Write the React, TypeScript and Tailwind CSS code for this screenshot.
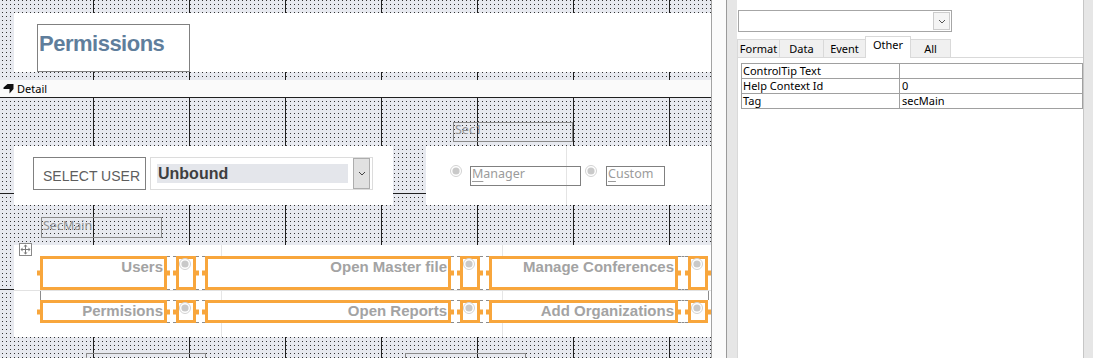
import React from "react";

const gridHeader =
  "bg-[#333333] [background-image:linear-gradient(to_right,transparent_93px,#1f1f1f_93px,#1f1f1f_94px,transparent_94px),linear-gradient(to_right,#e7e9ef_2px,transparent_2px,transparent_3px,#e7e9ef_3px),linear-gradient(to_bottom,transparent_1px,#e7e9ef_1px)] [background-size:96px_100%,4px_4px,4px_4px]";
const gridDetail =
  "bg-[#333333] [background-image:linear-gradient(to_right,transparent_93px,#1f1f1f_93px,#1f1f1f_94px,transparent_94px),linear-gradient(to_bottom,#1f1f1f_1px,transparent_1px),linear-gradient(to_right,#e7e9ef_2px,transparent_2px,transparent_3px,#e7e9ef_3px),linear-gradient(to_bottom,transparent_1px,#e7e9ef_1px)] [background-size:96px_100%,100%_96px,4px_4px,4px_4px]";

function Radio() {
  return (
    <svg width="12" height="12" viewBox="0 0 12 12" className="block shrink-0">
      <circle cx="6" cy="6" r="5.5" fill="#ffffff" stroke="#d2d2d2" />
      <circle cx="6" cy="6" r="3.6" fill="#c9c9c9" />
    </svg>
  );
}

function Handles() {
  return (
    <>
      <span className="absolute -left-[6px] top-1/2 -translate-y-1/2 w-[3px] h-[5px] bg-[#f8a63c]" />
      <span className="absolute -right-[6px] top-1/2 -translate-y-1/2 w-[3px] h-[5px] bg-[#f8a63c]" />
    </>
  );
}

function LabelBox({ className, text }: { className: string; text: string }) {
  return (
    <div className={`relative shrink-0 border-[3px] border-[#f8a63c] bg-white ${className}`}>
      <Handles />
      <div className="-mt-[1.5px] pr-px text-right font-bold text-[15px] leading-[17px] text-[#a3a3a3] font-['Liberation_Sans',Arial,sans-serif] whitespace-nowrap overflow-hidden">
        {text}
      </div>
    </div>
  );
}

function RadioBox() {
  return (
    <div className="relative shrink-0 w-[20px] border-[3px] border-[#f8a63c] bg-white">
      <Handles />
      <div className="-mt-px">
        <Radio />
      </div>
    </div>
  );
}

function Gap({ className }: { className: string }) {
  return <div className={`shrink-0 border-y border-dashed border-[#8c8c8c] ${className}`} />;
}

function ControlRow({ h, a, b, c }: { h: string; a: string; b: string; c: string }) {
  return (
    <div className={`flex ${h}`}>
      <LabelBox className="w-[127px]" text={a} />
      <Gap className="w-[9px]" />
      <RadioBox />
      <Gap className="w-[9px]" />
      <LabelBox className="w-[246px]" text={b} />
      <Gap className="w-[9px]" />
      <RadioBox />
      <Gap className="w-[9px]" />
      <LabelBox className="w-[189px]" text={c} />
      <Gap className="w-[10px]" />
      <RadioBox />
    </div>
  );
}

function MoveHandle() {
  return (
    <div className="absolute -top-[2px] left-[5px] w-[13px] h-[13px] border border-[#8a8a8a] bg-white flex items-center justify-center">
      <svg width="11" height="11" viewBox="0 0 11 11" className="block">
        <path d="M5.5 1.5v8M1.5 5.5h8" stroke="#7a7a7a" strokeWidth="1" />
        <path d="M5.5 0.5 3.5 2.5h4zM5.5 10.5 3.5 8.5h4zM0.5 5.5 2.5 3.5v4zM10.5 5.5 8.5 3.5v4z" fill="#7a7a7a" />
      </svg>
    </div>
  );
}

function DesignArea() {
  return (
    <div className="w-[711px] shrink-0 flex flex-col h-[358px] overflow-hidden">
      {/* Form header */}
      <div className={`h-[80px] shrink-0 pt-[13px] pl-[14px] ${gridHeader}`}>
        <div className="h-[59px] bg-white pl-[23px] pt-[11px]">
          <div className="w-[153px] h-[48px] border border-[#808080] pl-px pt-[6px] font-['Liberation_Sans',Arial,sans-serif] font-bold text-[22px] leading-[26px] tracking-[-0.5px] text-[#5f7e9c]">
            Permissions
          </div>
        </div>
      </div>
      {/* Detail bar */}
      <div className="h-[17px] shrink-0 bg-[#fafafa] flex items-center pl-[3px] gap-[3px] text-[11px] leading-[14px] text-black">
        <svg width="11" height="11" viewBox="0 0 11 11" className="block">
          <path d="M0.5 4.5 L4.5 1 L10.5 1 L10.5 6 L6.5 10.5 L6.5 6 L0.5 6 Z" fill="#111111" />
        </svg>
        <span>Detail</span>
      </div>
      {/* Detail section */}
      <div className={`flex-1 flex flex-col ${gridDetail}`}>
        <div className="ml-[453px] mt-[25px] w-[120px] h-[20px] border border-[#8a8a8a] pl-px text-[12.5px] leading-[14px] text-[#8f8f8f]">
          Sec1
        </div>
        <div className="flex mt-[4px] h-[59px] shrink-0">
          <div className="ml-[14px] w-[379px] shrink-0 bg-white flex items-start pt-[11px] pl-[19px]">
            <div className="w-[113px] h-[33px] shrink-0 border border-[#808080] pl-[9px] pt-[10px] text-[14px] leading-[16px] text-[#5e5e5e] font-['Liberation_Sans',Arial,sans-serif] whitespace-nowrap">
              SELECT USER
            </div>
            <div className="ml-[4px] w-[223px] h-[33px] shrink-0 border border-[#dcdcdc] flex items-start">
              <div className="ml-[6px] mt-[6px] w-[191px] h-[19px] bg-[#e4e6eb] pl-px text-[16px] leading-[19px] font-bold text-[#3f3f3f] font-['Liberation_Sans',Arial,sans-serif]">
                Unbound
              </div>
              <div className="ml-[5px] w-[17px] h-[31px] bg-[#e1e1e1] border border-[#adadad] flex items-center justify-center">
                <svg width="8" height="5" viewBox="0 0 8 5" className="block">
                  <path d="M1 1 L4 4 L7 1" fill="none" stroke="#444444" strokeWidth="1" />
                </svg>
              </div>
            </div>
          </div>
          <div className="relative ml-[33px] flex-1 bg-white flex items-start pt-[19px] pl-[24px]">
            <div className="absolute top-0 bottom-0 left-[140px] w-px bg-[#e4e4e4]" />
            <Radio />
            <div className="relative ml-[8px] mt-px w-[111px] h-[20px] shrink-0 border border-[#808080] pl-px text-[12.5px] leading-[14px] text-[#9b9b9b]">
              <span className="underline underline-offset-[3px]">M</span>anager
            </div>
            <div className="ml-[4px]">
              <Radio />
            </div>
            <div className="relative ml-[9px] mt-px w-[59px] h-[20px] shrink-0 border border-[#808080] pl-px text-[12.5px] leading-[14px] text-[#9b9b9b]">
              <span className="underline underline-offset-[3px]">C</span>ustom
            </div>
          </div>
        </div>
        <div className="ml-[41px] mt-[12px] w-[121px] h-[21px] shrink-0 border border-[#8a8a8a] pl-px pt-px text-[12.5px] leading-[14px] text-[#8f8f8f]">
          SecMain
        </div>
        <div className="relative ml-[14px] mt-[7px] h-[92px] shrink-0 bg-white pl-[26px] pt-[11px]">
          <div className="absolute top-0 bottom-0 left-[207px] w-px bg-[#e6e6e6]" />
          <div className="absolute top-0 bottom-0 left-[488px] w-px bg-[#e6e6e6]" />
          <div className="absolute left-0 right-0 top-[45px] h-px bg-[#e2e2e2]" />
          <MoveHandle />
          <ControlRow h="h-[34px]" a="Users" b="Open Master file" c="Manage Conferences" />
          <div className="h-[10px] w-[669px] border-x border-[#8c8c8c]" />
          <ControlRow h="h-[23px]" a="Permisions" b="Open Reports" c="Add Organizations" />
        </div>
        <div className="flex mt-[16px] h-[10px] shrink-0">
          <div className="ml-[86px] w-[120px] border border-b-0 border-[#8a8a8a]" />
          <div className="ml-[199px] w-[121px] border border-b-0 border-[#8a8a8a]" />
        </div>
      </div>
    </div>
  );
}

const tabs: { label: string; cls: string }[] = [
  { label: "Format", cls: "w-[42px] h-[18px] bg-[#f0f0f0] border-l border-t items-center" },
  { label: "Data", cls: "w-[44px] h-[18px] bg-[#f0f0f0] border-l border-t items-center" },
  { label: "Event", cls: "w-[42px] h-[18px] bg-[#f0f0f0] border-l border-t items-center" },
  { label: "Other", cls: "w-[46px] h-[22px] bg-white border-l border-t border-r items-start relative z-10 -mb-px" },
  { label: "All", cls: "w-[40px] h-[18px] bg-[#f0f0f0] border-t border-r items-center" },
];

const props: [string, string][] = [
  ["ControlTip Text", ""],
  ["Help Context Id", "0"],
  ["Tag", "secMain"],
];

function PropertySheet() {
  return (
    <div className="w-[346px] shrink-0 bg-white flex flex-col text-[11px] leading-[15px] text-black">
      <div className="mt-[10px] ml-px w-[214px] h-[22px] border border-[#a6a6a6] flex items-center justify-end pr-px">
        <div className="w-[17px] h-[18px] border border-[#cccccc] bg-[#f4f4f4] flex items-center justify-center">
          <svg width="8" height="5" viewBox="0 0 8 5" className="block">
            <path d="M1 1 L4 4 L7 1" fill="none" stroke="#555555" strokeWidth="1" />
          </svg>
        </div>
      </div>
      <div className="mt-[4px] flex items-end h-[21px]">
        {tabs.map((t) => (
          <div key={t.label} className={`flex justify-center border-[#d9d9d9] ${t.cls}`}>
            {t.label}
          </div>
        ))}
      </div>
      <div className="flex-1 border-t border-l border-[#d9d9d9] pt-[5px] pl-[3px]">
        <div className="w-[342px] border-t border-l border-[#a0a0a0]">
          {props.map(([k, v]) => (
            <div key={k} className="flex h-[15px]">
              <div className="w-[158px] shrink-0 border-r border-b border-[#a0a0a0] pl-px leading-[14px] whitespace-nowrap">
                {k}
              </div>
              <div className="flex-1 border-r border-b border-[#a0a0a0] pl-[2px] leading-[14px]">{v}</div>
            </div>
          ))}
        </div>
      </div>
    </div>
  );
}

export default function App() {
  return (
    <div className="flex w-[1093px] h-[358px] overflow-hidden bg-white font-['Noto_Sans',sans-serif]">
      <DesignArea />
      <div className="w-px shrink-0 bg-[#a3a3a3]" />
      <div className="w-[14px] shrink-0 bg-[#fbfbfb]" />
      <div className="w-px shrink-0 bg-[#9a9a9a]" />
      <div className="w-[10px] shrink-0 bg-[#e6e6e6]" />
      <PropertySheet />
      <div className="w-px shrink-0 bg-[#c6c6c6]" />
      <div className="w-[9px] shrink-0 bg-[#e6e6e6]" />
    </div>
  );
}
